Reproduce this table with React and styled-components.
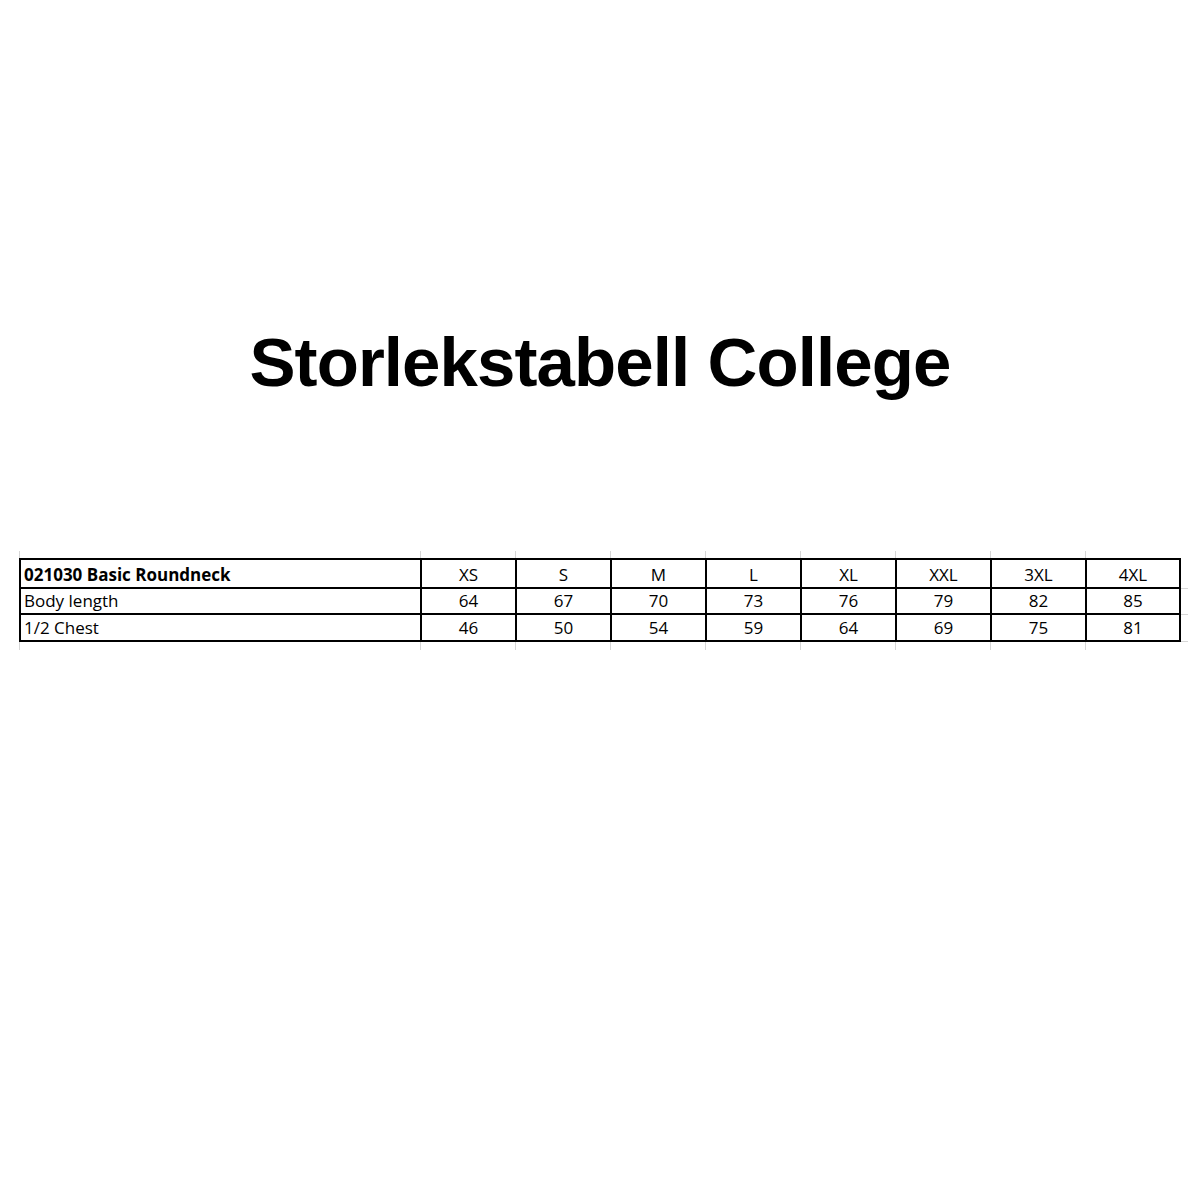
import React from "react";
import styled, { createGlobalStyle } from "styled-components";

const GlobalStyle = createGlobalStyle`
  body {
    margin: 0;
    background: #ffffff;
    font-family: "Open Sans", "Liberation Sans", sans-serif;
  }
`;

const Page = styled.div`
  width: 1200px;
  height: 1200px;
  display: flex;
  flex-direction: column;
  align-items: center;
`;

const Title = styled.h1`
  margin: 323px 0 0 0;
  font-family: "Liberation Sans", Arial, sans-serif;
  font-weight: 700;
  font-size: 69px;
  line-height: 80px;
  letter-spacing: -0.9px;
  color: #000;
`;

const Sheet = styled.div`
  margin-top: 155px;
  align-self: flex-start;
  margin-left: 19px;
  position: relative;
`;

const Table = styled.table`
  border-collapse: collapse;
  table-layout: fixed;
  width: 1160px;
  font-size: 17px;
  color: #000;
`;

const Row = styled.tr`
  height: ${(p) => p.$h}px;
`;

const Cell = styled.td`
  border: 2px solid #000;
  padding: 0 3px 1px 3px;
  vertical-align: bottom;
  line-height: 22px;
  text-align: ${(p) => (p.$label ? "left" : "center")};
  font-weight: ${(p) => (p.$bold ? 700 : 400)};
  white-space: nowrap;
  position: relative;

  &::before {
    content: ${(p) => (p.$tickTop ? '""' : "none")};
    position: absolute;
    left: -2px;
    top: -9px;
    width: 1px;
    height: 7px;
    background: #d6d6d6;
  }

  &::after {
    content: ${(p) => (p.$tickBottom ? '""' : "none")};
    position: absolute;
    left: -2px;
    bottom: -10px;
    width: 1px;
    height: 8px;
    background: #d6d6d6;
  }
`;

const RightTick = styled.span`
  position: absolute;
  right: -9px;
  bottom: -2px;
  width: 7px;
  height: 1px;
  background: #d6d6d6;
`;

const sizes = ["XS", "S", "M", "L", "XL", "XXL", "3XL", "4XL"];

const rows = [
  { label: "Body length", values: [64, 67, 70, 73, 76, 79, 82, 85], h: 26 },
  { label: "1/2 Chest", values: [46, 50, 54, 59, 64, 69, 75, 81], h: 27 },
];

export default function App() {
  return (
    <>
      <GlobalStyle />
      <Page>
        <Title>Storlekstabell College</Title>
        <Sheet>
          <Table>
            <colgroup>
              <col style={{ width: 401 }} />
              {sizes.map((s, i) => (
                <col key={s} style={{ width: i === sizes.length - 1 ? 94 : 95 }} />
              ))}
            </colgroup>
            <tbody>
              <Row $h={29}>
                <Cell $label $bold $tickTop>
                  021030 Basic Roundneck
                </Cell>
                {sizes.map((s, i) => (
                  <Cell key={s} $tickTop>
                    {s}
                    {i === sizes.length - 1 && <RightTick />}
                  </Cell>
                ))}
              </Row>
              {rows.map((r, ri) => (
                <Row key={r.label} $h={r.h}>
                  <Cell $label $tickBottom={ri === rows.length - 1}>
                    {r.label}
                  </Cell>
                  {r.values.map((v, i) => (
                    <Cell key={i} $tickBottom={ri === rows.length - 1}>
                      {v}
                      {i === r.values.length - 1 && <RightTick />}
                    </Cell>
                  ))}
                </Row>
              ))}
            </tbody>
          </Table>
        </Sheet>
      </Page>
    </>
  );
}
